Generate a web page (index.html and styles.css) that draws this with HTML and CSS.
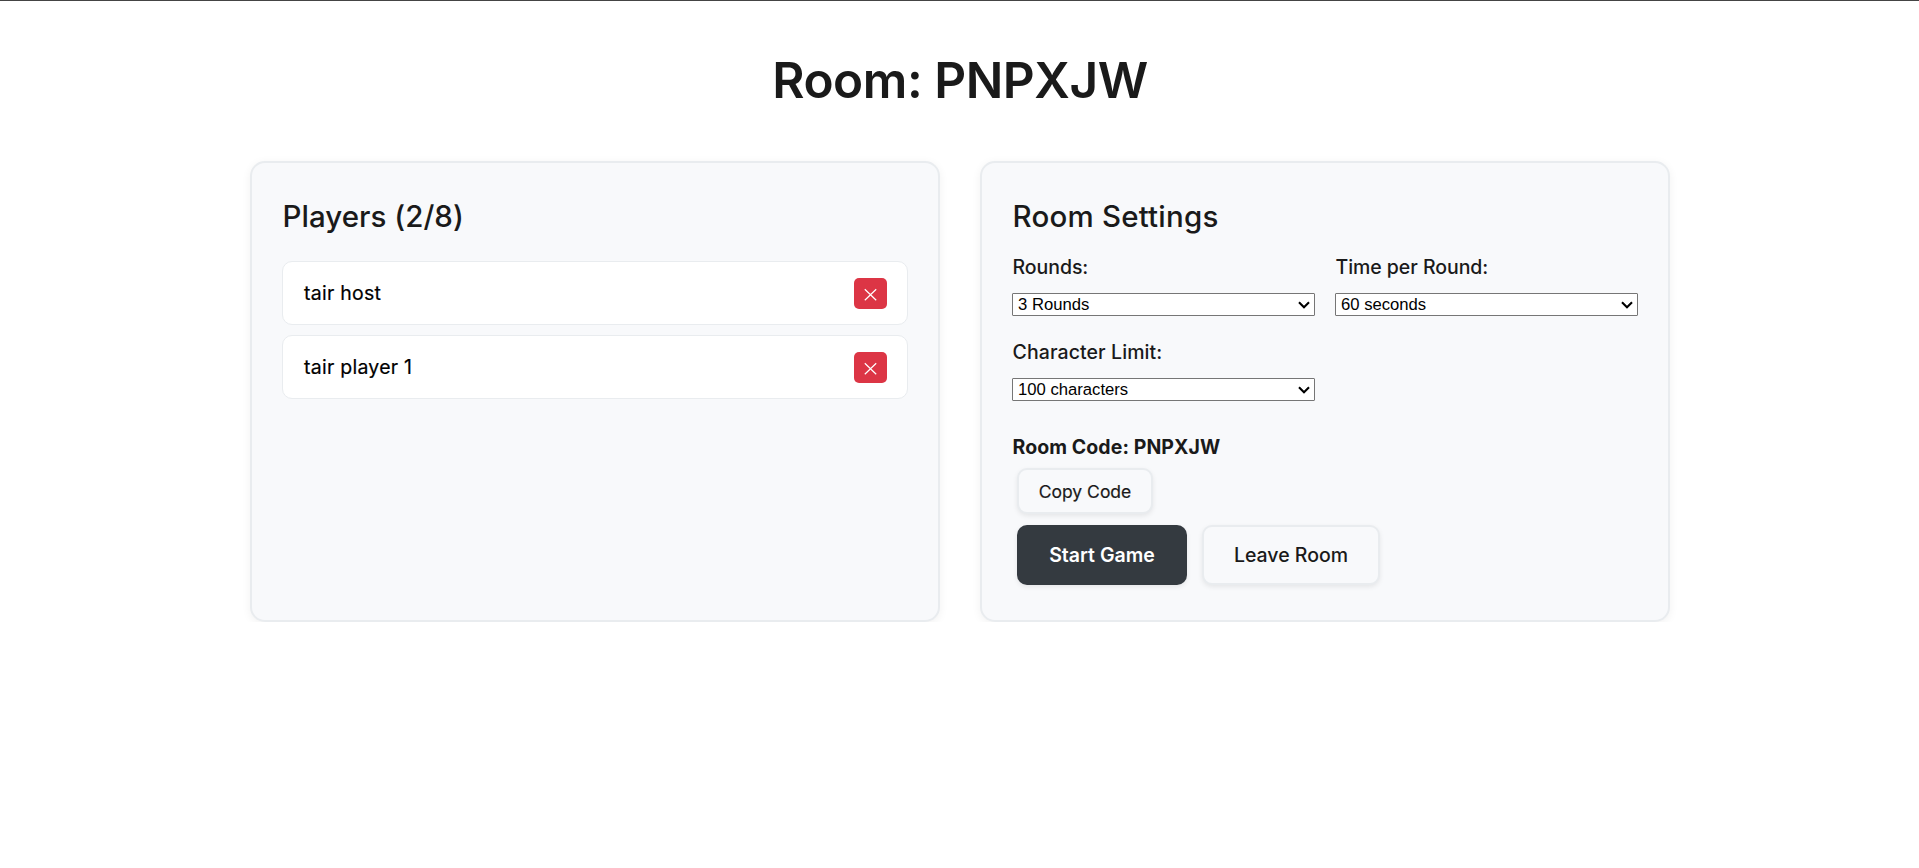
FILE: index.html
```html
<!DOCTYPE html>
<html lang="en">
<head>
<meta charset="utf-8">
<title>Room: PNPXJW</title>
<link rel="stylesheet" href="styles.css">
</head>
<body>
<main class="page">
  <h1 class="page-title">Room: PNPXJW</h1>
  <div class="columns">
    <section class="card">
      <h2 class="card-title players-title">Players (2/8)</h2>
      <ul class="players">
        <li class="player"><span>tair host</span>
          <button class="kick" aria-label="Remove"><svg width="13" height="13" viewBox="0 0 13 13"><path d="M0.8 1.2L12.2 12.2M12.2 1.2L0.8 12.2"/></svg></button></li>
        <li class="player"><span>tair player 1</span>
          <button class="kick" aria-label="Remove"><svg width="13" height="13" viewBox="0 0 13 13"><path d="M0.8 1.2L12.2 12.2M12.2 1.2L0.8 12.2"/></svg></button></li>
      </ul>
    </section>
    <section class="card">
      <h2 class="card-title settings-title">Room Settings</h2>
      <div class="settings">
        <label class="field"><span class="label label-tight">Rounds:</span><select class="select"><option>3 Rounds</option></select></label>
        <label class="field"><span class="label label-tight">Time per Round:</span><select class="select"><option>60 seconds</option></select></label>
        <label class="field"><span class="label">Character Limit:</span><select class="select"><option>100 characters</option></select></label>
      </div>
      <p class="room-code">Room Code: PNPXJW</p>
      <button class="btn btn-copy">Copy Code</button>
      <div class="actions">
        <button class="btn btn-start">Start Game</button>
        <button class="btn btn-leave">Leave Room</button>
      </div>
    </section>
  </div>
</main>
</body>
</html>
```
FILE: styles.css
```css
* { box-sizing: border-box; }
body {
  margin: 0;
  border-top: 1px solid #444;
  background: #fff;
  color: #1a1a1a;
  font-family: Inter, "Liberation Sans", sans-serif;
  font-size: 19.5px;
}
.page { width: 1420px; margin: 0 0 0 250px; padding-top: 49px; }
.page-title {
  margin: 0 0 51px;
  font-size: 49.5px; line-height: 60px; font-weight: 600;
  letter-spacing: -.45px; text-align: center;
}
.columns { display: grid; grid-template-columns: 1fr 1fr; gap: 40px; }
.card {
  height: 461px;
  padding: 30px;
  border: 2px solid #e9ecef;
  border-radius: 15px;
  background: #f8f9fb;
  box-shadow: 0 2px 10px rgba(0, 0, 0, .06);
}
.card-title { margin: 0; padding-left: 0.5px; font-size: 29.5px; line-height: 46px; font-weight: 500; }
.players-title { margin-bottom: 22px; letter-spacing: .03px; }
.settings-title { margin-bottom: 13px; letter-spacing: .2px; }
.players { display: grid; gap: 10px; margin: 0; padding: 0; list-style: none; }
.player {
  display: flex; align-items: center; justify-content: space-between;
  height: 64px; padding: 0 20px 0 21px;
  border: 1px solid #e9ecef; border-radius: 10px;
  background: #fff; color: #000;
  letter-spacing: .25px;
  -webkit-text-stroke: .2px #000;
}
.kick {
  display: flex; align-items: center; justify-content: center;
  width: 33px; height: 31px; padding: 2px 0 0;
  border: 0; border-radius: 5px; background: #dc3545;
}
.kick svg { fill: none; stroke: #fff; stroke-width: 1.2; }
.settings { display: grid; grid-template-columns: 1fr 1fr; gap: 21px 20px; }
.field { display: grid; gap: 11px; line-height: 30px; font-weight: 500; }
.label { padding-left: .5px; letter-spacing: .1px; }
.label-tight { letter-spacing: -.05px; }
.select {
  appearance: none;
  width: 100%; height: 23px; margin: 0; padding: 0 5px;
  border: 1px solid #767676; border-radius: 1px; color: #000;
  background: #fff url("data:image/svg+xml,%3Csvg xmlns='http://www.w3.org/2000/svg' width='12' height='8'%3E%3Cpath d='M1 1.3L6 6.3L11 1.3' fill='none' stroke='%23000' stroke-width='2.1'/%3E%3C/svg%3E") no-repeat right 4px top 7px;
  font: 16.67px/21px "Liberation Sans", Arial, sans-serif;
}
.room-code { margin: 31px 0 6px; padding-left: .5px; line-height: 30px; font-weight: 700; letter-spacing: .08px; }
.btn {
  display: block; padding: 0;
  border: 2px solid #e9ecef; border-radius: 10px;
  background: #f8f9fb; color: #1a1a1a;
  font-family: inherit; font-size: 19.5px; font-weight: 500;
  box-shadow: 0 2px 5px rgba(0, 0, 0, .08);
}
.btn-copy {
  width: 136px; height: 46px; margin-left: 5px;
  font-size: 17.5px; font-weight: 400;
  -webkit-text-stroke: .2px #1a1a1a;
}
.actions { display: flex; gap: 15px; margin: 11px 0 0 5px; }
.btn-start { width: 170px; height: 60px; border: 0; background: #343a40; color: #fff; font-weight: 600; }
.btn-leave { width: 178px; height: 60px; }
```
